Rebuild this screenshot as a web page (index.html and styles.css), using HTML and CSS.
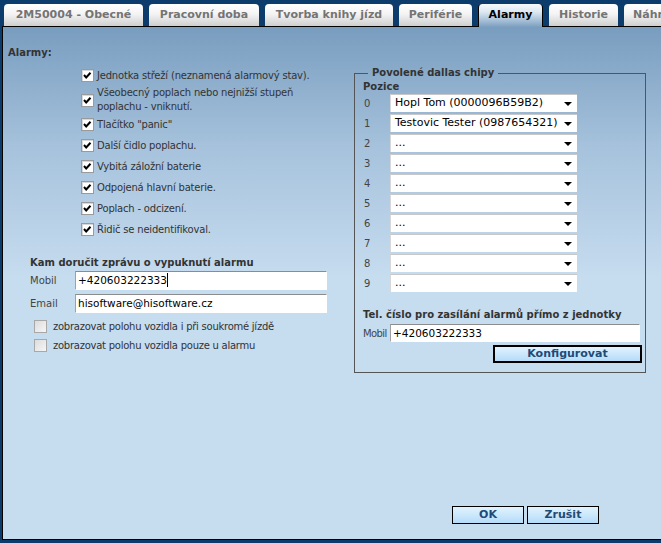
FILE: index.html
```html
<!DOCTYPE html>
<html lang="cs">
<head>
<meta charset="utf-8">
<title>Alarmy</title>
<link rel="stylesheet" href="styles.css">
</head>
<body>
<div class="screen">
  <div class="tabs">
    <div class="tab t1">2M50004 - Obecné</div>
    <div class="tab t2">Pracovní doba</div>
    <div class="tab t3">Tvorba knihy jízd</div>
    <div class="tab t4">Periférie</div>
    <div class="tab t5 active">Alarmy</div>
    <div class="tab t6">Historie</div>
    <div class="tab t7">Náhrady</div>
  </div>
  <div class="panel">
    <div class="top">
      <div class="left">
        <div class="title">Alarmy:</div>
        <div class="checks">
          <div class="chk-row"><span class="cb on"><svg viewBox="0 0 13 13" width="13" height="13"><polyline points="3,6 5.2,8.5 9.5,3.8" fill="none" stroke="#000" stroke-width="2"/></svg></span><span class="chk-text">Jednotka střeží (neznamená alarmový stav).</span></div>
          <div class="chk-row double"><span class="cb on"><svg viewBox="0 0 13 13" width="13" height="13"><polyline points="3,6 5.2,8.5 9.5,3.8" fill="none" stroke="#000" stroke-width="2"/></svg></span><span class="chk-text">Všeobecný poplach nebo nejnižší stupeň<br>poplachu - vniknutí.</span></div>
          <div class="chk-row"><span class="cb on"><svg viewBox="0 0 13 13" width="13" height="13"><polyline points="3,6 5.2,8.5 9.5,3.8" fill="none" stroke="#000" stroke-width="2"/></svg></span><span class="chk-text">Tlačítko "panic"</span></div>
          <div class="chk-row"><span class="cb on"><svg viewBox="0 0 13 13" width="13" height="13"><polyline points="3,6 5.2,8.5 9.5,3.8" fill="none" stroke="#000" stroke-width="2"/></svg></span><span class="chk-text">Další čidlo poplachu.</span></div>
          <div class="chk-row"><span class="cb on"><svg viewBox="0 0 13 13" width="13" height="13"><polyline points="3,6 5.2,8.5 9.5,3.8" fill="none" stroke="#000" stroke-width="2"/></svg></span><span class="chk-text">Vybitá záložní baterie</span></div>
          <div class="chk-row"><span class="cb on"><svg viewBox="0 0 13 13" width="13" height="13"><polyline points="3,6 5.2,8.5 9.5,3.8" fill="none" stroke="#000" stroke-width="2"/></svg></span><span class="chk-text">Odpojená hlavní baterie.</span></div>
          <div class="chk-row"><span class="cb on"><svg viewBox="0 0 13 13" width="13" height="13"><polyline points="3,6 5.2,8.5 9.5,3.8" fill="none" stroke="#000" stroke-width="2"/></svg></span><span class="chk-text">Poplach - odcizení.</span></div>
          <div class="chk-row"><span class="cb on"><svg viewBox="0 0 13 13" width="13" height="13"><polyline points="3,6 5.2,8.5 9.5,3.8" fill="none" stroke="#000" stroke-width="2"/></svg></span><span class="chk-text">Řidič se neidentifikoval.</span></div>
        </div>
        <div class="notify">
          <div class="subtitle">Kam doručit zprávu o vypuknutí alarmu</div>
          <div class="field"><span class="label">Mobil</span><div class="input">+420603222333<span class="caret"></span></div></div>
          <div class="field"><span class="label">Email</span><div class="input">hisoftware@hisoftware.cz</div></div>
          <div class="opt-row first"><span class="cb off"></span><span>zobrazovat polohu vozidla i při soukromé jízdě</span></div>
          <div class="opt-row"><span class="cb off"></span><span>zobrazovat polohu vozidla pouze u alarmu</span></div>
        </div>
      </div>
      <fieldset class="dallas">
        <legend>Povolené dallas chipy</legend>
        <div class="pozice">Pozice</div>
        <div class="chip-row"><span class="idx">0</span><div class="select">Hopl Tom (0000096B59B2)<span class="arrow"></span></div></div>
        <div class="chip-row"><span class="idx">1</span><div class="select">Testovic Tester (0987654321)<span class="arrow"></span></div></div>
        <div class="chip-row"><span class="idx">2</span><div class="select">...<span class="arrow"></span></div></div>
        <div class="chip-row"><span class="idx">3</span><div class="select">...<span class="arrow"></span></div></div>
        <div class="chip-row"><span class="idx">4</span><div class="select">...<span class="arrow"></span></div></div>
        <div class="chip-row"><span class="idx">5</span><div class="select">...<span class="arrow"></span></div></div>
        <div class="chip-row"><span class="idx">6</span><div class="select">...<span class="arrow"></span></div></div>
        <div class="chip-row"><span class="idx">7</span><div class="select">...<span class="arrow"></span></div></div>
        <div class="chip-row"><span class="idx">8</span><div class="select">...<span class="arrow"></span></div></div>
        <div class="chip-row"><span class="idx">9</span><div class="select">...<span class="arrow"></span></div></div>
        <div class="tel-title">Tel. číslo pro zasílání alarmů přímo z jednotky</div>
        <div class="tel-row"><span class="tel-label">Mobil</span><div class="input tel-input">+420603222333</div></div>
        <div class="cfg-row"><div class="btn btn-cfg">Konfigurovat</div></div>
      </fieldset>
    </div>
    <div class="actions">
      <div class="btn btn-ok">OK</div>
      <div class="btn btn-ok">Zrušit</div>
    </div>
  </div>
</div>
</body>
</html>
```

FILE: styles.css
```css
* { box-sizing: border-box; }
html, body {
  margin: 0;
  padding: 0;
  height: 100%;
  overflow: hidden;
  background: #0b3c6c;
}
body {
  font-family: "DejaVu Sans", Verdana, sans-serif;
  font-size: 10px;
  color: #333;
}
.screen {
  width: 661px;
  height: 543px;
  padding-top: 4px;
  overflow: hidden;
}
.tabs {
  display: flex;
  gap: 6px;
  margin-left: 4px;
  height: 22px;
  white-space: nowrap;
}
.tab {
  flex: none;
  height: 22px;
  line-height: 22px;
  text-align: center;
  font-weight: bold;
  font-size: 11px;
  color: #747474;
  border-radius: 4px 4px 0 0;
  background: linear-gradient(#ffffff 0%, #f4f4f4 45%, #cfcfcf 100%);
}
.t1 { width: 139px; }
.t2 { width: 110px; }
.t3 { width: 128px; }
.t4 { width: 73px; }
.t5 { width: 65px; }
.t6 { width: 69px; }
.t7 { width: 80px; text-align: left; padding-left: 9px; }
.tab.active {
  color: #000;
  height: 23px;
  position: relative;
  z-index: 1;
  border-left: 1px solid #000;
  border-right: 1px solid #000;
  background: linear-gradient(#f6f9fc 0%, #dce8f2 35%, #7c9fc0 100%);
}
.panel {
  margin-left: 2px;
  width: 700px;
  height: 514px;
  border: 1px solid #000;
  background: linear-gradient(#799dbf 0px, #a6c2dc 120px, #c6dcef 250px, #c6dcef 100%);
  display: flex;
  flex-direction: column;
}
.top {
  display: flex;
  align-items: flex-start;
}
.left {
  width: 351px;
  flex: none;
}
.title {
  font-weight: bold;
  line-height: 14px;
  margin: 19px 0 0 5px;
}
.checks {
  margin-top: 5px;
  padding-left: 78px;
  letter-spacing: -0.2px;
}
.chk-row {
  display: flex;
  align-items: center;
  height: 21px;
  line-height: 14px;
}
.chk-row.double { height: 28px; }
.chk-text { margin-left: 3px; }
.cb {
  flex: none;
  width: 13px;
  height: 13px;
  display: block;
}
.cb svg { display: block; }
.cb.on {
  background: #fff;
  border: 1px solid #9a9a9a;
  box-shadow: inset 1px 1px 0 #d8d8d8;
}
.cb.on svg { margin: -1px 0 0 -1px; }
.cb.off {
  background: linear-gradient(135deg, #dcdcdc, #f6f6f6);
  border: 1px solid #a8a8a8;
}
.notify {
  margin-top: 16px;
  padding-left: 27px;
}
.subtitle {
  font-weight: bold;
  line-height: 14px;
  margin-bottom: 1px;
}
.field {
  display: flex;
  align-items: center;
  margin-bottom: 4px;
  color: #444;
}
.label { width: 45px; }
.input {
  width: 252px;
  height: 19px;
  background: #fff;
  border: 1px solid #fff;
  border-top-color: #8c8c8c;
  border-left-color: #a0a0a0;
  font-size: 10.5px;
  line-height: 17px;
  padding-left: 2px;
  color: #000;
  white-space: nowrap;
}
.caret {
  display: inline-block;
  width: 1px;
  height: 14px;
  background: #000;
  vertical-align: -3px;
}
.opt-row {
  display: flex;
  align-items: center;
  height: 19px;
  padding-left: 4px;
  letter-spacing: -0.25px;
}
.opt-row.first { margin-top: 2px; }
.opt-row .cb { margin-right: 6px; }
.dallas {
  flex: none;
  width: 292px;
  margin: 39px 0 0 0;
  padding: 0 3px 9px 8px;
  border: 1px solid #555;
  min-width: 0;
}
.dallas legend {
  font-weight: bold;
  font-size: 10px;
  line-height: 14px;
  padding: 0 4px;
  margin-left: 5px;
}
.pozice {
  font-weight: bold;
  line-height: 14px;
}
.chip-row {
  display: flex;
  align-items: center;
  height: 18px;
  margin-bottom: 2px;
}
.idx {
  width: 27px;
  padding-left: 1px;
  color: #444;
}
.select {
  position: relative;
  width: 187px;
  height: 18px;
  background: #fff;
  border-top: 1px solid #c8c8c8;
  border-left: 1px solid #d8d8d8;
  font-size: 11px;
  line-height: 16px;
  padding-left: 4px;
  color: #000;
  white-space: nowrap;
}
.arrow {
  position: absolute;
  right: 5px;
  top: 7px;
  width: 0;
  height: 0;
  border-left: 4px solid transparent;
  border-right: 4px solid transparent;
  border-top: 4px solid #000;
}
.tel-title {
  font-weight: bold;
  font-size: 10px;
  line-height: 14px;
  margin-top: 16px;
}
.tel-row {
  display: flex;
  align-items: center;
  margin-top: 2px;
  color: #444;
}
.tel-label { width: 27px; letter-spacing: -0.6px; }
.tel-input {
  width: 250px;
  height: 18px;
  line-height: 16px;
  font-size: 10.5px;
}
.cfg-row {
  display: flex;
  justify-content: flex-end;
  margin-top: 3px;
}
.btn {
  height: 18px;
  text-align: center;
  font-weight: bold;
  font-size: 11px;
  color: #1e4b78;
  background: linear-gradient(#e2f3ff, #b4dcf8);
}
.btn-cfg {
  width: 149px;
  border: 2px solid #000;
  line-height: 14px;
}
.actions {
  margin-top: auto;
  margin-bottom: 15px;
  margin-left: 449px;
  display: flex;
  gap: 3px;
}
.btn-ok {
  width: 72px;
  border: 1px solid #000;
  line-height: 16px;
}
```
